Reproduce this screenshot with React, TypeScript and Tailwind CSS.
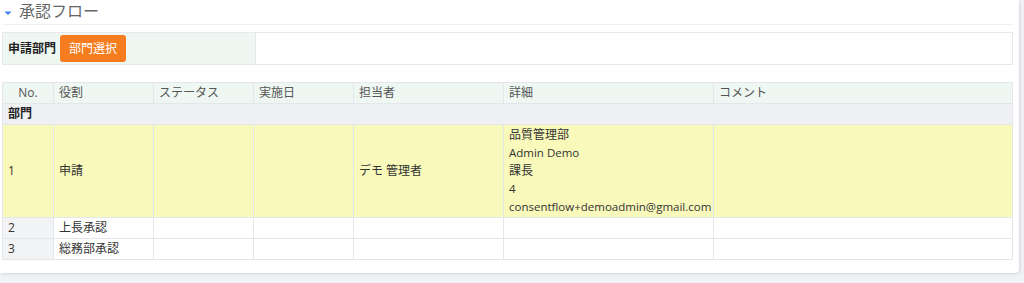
// 承認フロー — 申請部門の選択と承認ステップ一覧
const font = "font-['Open_Sans','Noto_Sans_CJK_JP',sans-serif]";

type Step = {
  no: number;
  role: string;
  status?: string;
  date?: string;
  assignee?: string;
  detail?: string[];
  comment?: string;
  current?: boolean;
};

const steps: Step[] = [
  {
    no: 1,
    role: '申請',
    assignee: 'デモ 管理者',
    detail: ['品質管理部', 'Admin Demo', '課長', '4', 'consentflow+demoadmin@gmail.com'],
    current: true,
  },
  { no: 2, role: '上長承認' },
  { no: 3, role: '総務部承認' },
];

const cols = ['w-[51px]', 'w-[100px]', 'w-[100px]', 'w-[100px]', 'w-[150px]', 'w-[210px]', ''];
const heads = ['No.', '役割', 'ステータス', '実施日', '担当者', '詳細', 'コメント'];

const cell = 'border border-[#e3e6ea] px-[5px] py-px align-middle leading-[18px]';

export default function App() {
  return (
    <div className={`h-[283px] w-[1024px] overflow-hidden bg-[#f0f2f6] text-[12px] text-[#333] ${font}`}>
      <div className="h-[273px] w-[1019px] rounded-br-[4px] bg-white pl-[2px] pr-[6px] shadow-[1px_1px_3px_rgba(0,0,0,0.12)]">
        <div className="flex h-[25px] items-center gap-[7px] border-b border-[#f0f1f3] pl-[2px]">
          <svg width="8" height="6" viewBox="0 0 8 6" className="mt-[2px]">
            <path d="M0.5 1.5h7L4 5z" fill="#3b82f6" />
          </svg>
          <span className="-mt-[2px] text-[16px] leading-[20px] text-[#666]">承認フロー</span>
        </div>

        <div className="mt-[7px] flex h-[33px] border border-[#e6e8eb]">
          <div className="flex w-[253px] items-center gap-[4px] border-r border-[#e6e8eb] bg-[#eef7f1] pl-[5px]">
            <span className="font-bold text-[#222]">申請部門</span>
            <button
              type="button"
              className="h-[27px] rounded-[3px] bg-[#f57d1f] px-[9px] text-[12px] text-white"
            >
              部門選択
            </button>
          </div>
          <div className="flex-1 bg-white" />
        </div>

        <table className="mt-[17px] w-[1011px] table-fixed border-collapse">
          <colgroup>
            {cols.map((c, i) => (
              <col key={i} className={c} />
            ))}
          </colgroup>
          <thead>
            <tr className="bg-[#eef7f1] text-[#555]">
              {heads.map((h, i) => (
                <th key={h} className={`${cell} font-normal ${i === 0 ? 'text-center' : 'text-left'}`}>
                  {h}
                </th>
              ))}
            </tr>
          </thead>
          <tbody>
            <tr className="bg-[#eef0f3]">
              <td colSpan={7} className={`${cell} font-bold text-[#222]`}>
                部門
              </td>
            </tr>
            {steps.map((s) => (
              <tr key={s.no} className={s.current ? 'bg-[#f9f9bb]' : 'bg-white'}>
                <td className={`${cell} ${s.current ? '' : 'bg-[#f2f3f5]'}`}>{s.no}</td>
                <td className={cell}>{s.role}</td>
                <td className={cell}>{s.status}</td>
                <td className={cell}>{s.date}</td>
                <td className={cell}>{s.assignee}</td>
                <td className={`${cell} ${s.detail ? 'py-[2px] leading-[18.6px]' : ''}`}>
                  {s.detail?.map((line) => (
                    <div key={line} className={/^[\x00-\x7f]+$/.test(line) ? 'text-[11.5px]' : ''}>
                      {line}
                    </div>
                  ))}
                </td>
                <td className={cell}>{s.comment}</td>
              </tr>
            ))}
          </tbody>
        </table>
      </div>
    </div>
  );
}
